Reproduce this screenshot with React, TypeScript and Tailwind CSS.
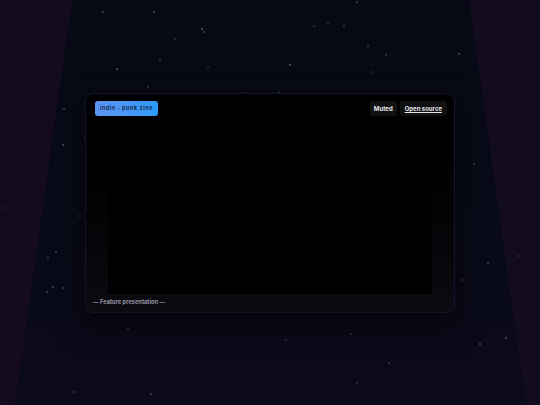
import React from 'react'

const stars: [number, number, number][] = [
  [102, 11, 0.6], [153, 11, 0.7], [201, 28, 0.8], [203, 31, 0.6], [174, 38, 0.4],
  [159, 59, 0.5], [116, 68, 0.8], [207, 66, 0.4], [289, 64, 0.8], [313, 25, 0.4],
  [343, 25, 0.5], [327, 22, 0.4], [367, 45, 0.5], [385, 54, 0.5], [458, 53, 0.7],
  [372, 71, 0.4], [147, 86, 0.5], [278, 92, 0.6], [245, 92, 0.4], [356, 1, 0.6],
  [63, 108, 0.6], [62, 144, 0.7], [79, 215, 0.6], [55, 251, 0.6], [47, 257, 0.5],
  [52, 286, 0.7], [62, 287, 0.5], [46, 291, 0.6], [473, 163, 0.5], [487, 262, 0.6],
  [461, 279, 0.5], [517, 255, 0.4], [127, 328, 0.5], [285, 339, 0.4], [350, 333, 0.4],
  [479, 343, 0.7], [505, 337, 0.7], [388, 362, 0.5], [150, 393, 0.6], [73, 391, 0.5],
  [356, 382, 0.4], [4, 207, 0.4], [84, 137, 0.6],
]

export default function App() {
  return (
    <div className="relative w-[540px] h-[405px] overflow-hidden bg-gradient-to-b from-[#070a15] via-[#080a17] to-[#0b0a1a] font-['Inter','Noto_Sans',sans-serif]">
      {/* curtains */}
      <svg className="absolute inset-0" width="540" height="405" viewBox="0 0 540 405">
        <polygon points="0,0 72,0 15,405 0,405" fill="#140c1e" />
        <polygon points="469,0 540,0 540,405 526,405" fill="#130c21" />
      </svg>

      {/* stars */}
      {stars.map(([x, y, o], i) => (
        <span
          key={i}
          className="absolute w-[1.5px] h-[1.5px] rounded-full bg-[#a4acc0]"
          style={{ left: x, top: y, opacity: o * 0.6 }}
        />
      ))}

      <div className="relative pt-[93px] pl-[85px]">
        <div className="w-[370px] h-[220px] rounded-lg border border-[#15142a] bg-gradient-to-b from-[#000000] via-[#030305] to-[#0c0b12] flex flex-col shadow-[0_10px_30px_rgba(0,0,0,0.6)]">
          <div className="flex items-center justify-between pl-[9px] pr-[7px] pt-[7px]">
            <span className="h-[15px] px-[5px] rounded-[3px] bg-gradient-to-r from-[#5b94f4] to-[#2c9bf8] text-[#142a55] text-[5.5px] font-bold tracking-[0.1em] flex items-center">
              indie · punk zine
            </span>
            <div className="flex items-center gap-[3px]">
              <span className="h-[15px] px-[4px] rounded-[3px] bg-[#111112] text-[#e4e4ea] text-[6px] font-bold flex items-center">
                Muted
              </span>
              <span className="h-[15px] px-[5px] rounded-[3px] bg-[#111112] text-[#e4e4ea] text-[6px] font-bold underline flex items-center">
                Open source
              </span>
            </div>
          </div>
          <div className="mx-[22px] mt-[3px] h-[175px] bg-black" />
          <div className="pl-[7px] pt-[4px] text-[5.5px] font-bold tracking-[0.02em] text-[#9c9aa8]">
            — Feature presentation —
          </div>
        </div>
      </div>
    </div>
  )
}
